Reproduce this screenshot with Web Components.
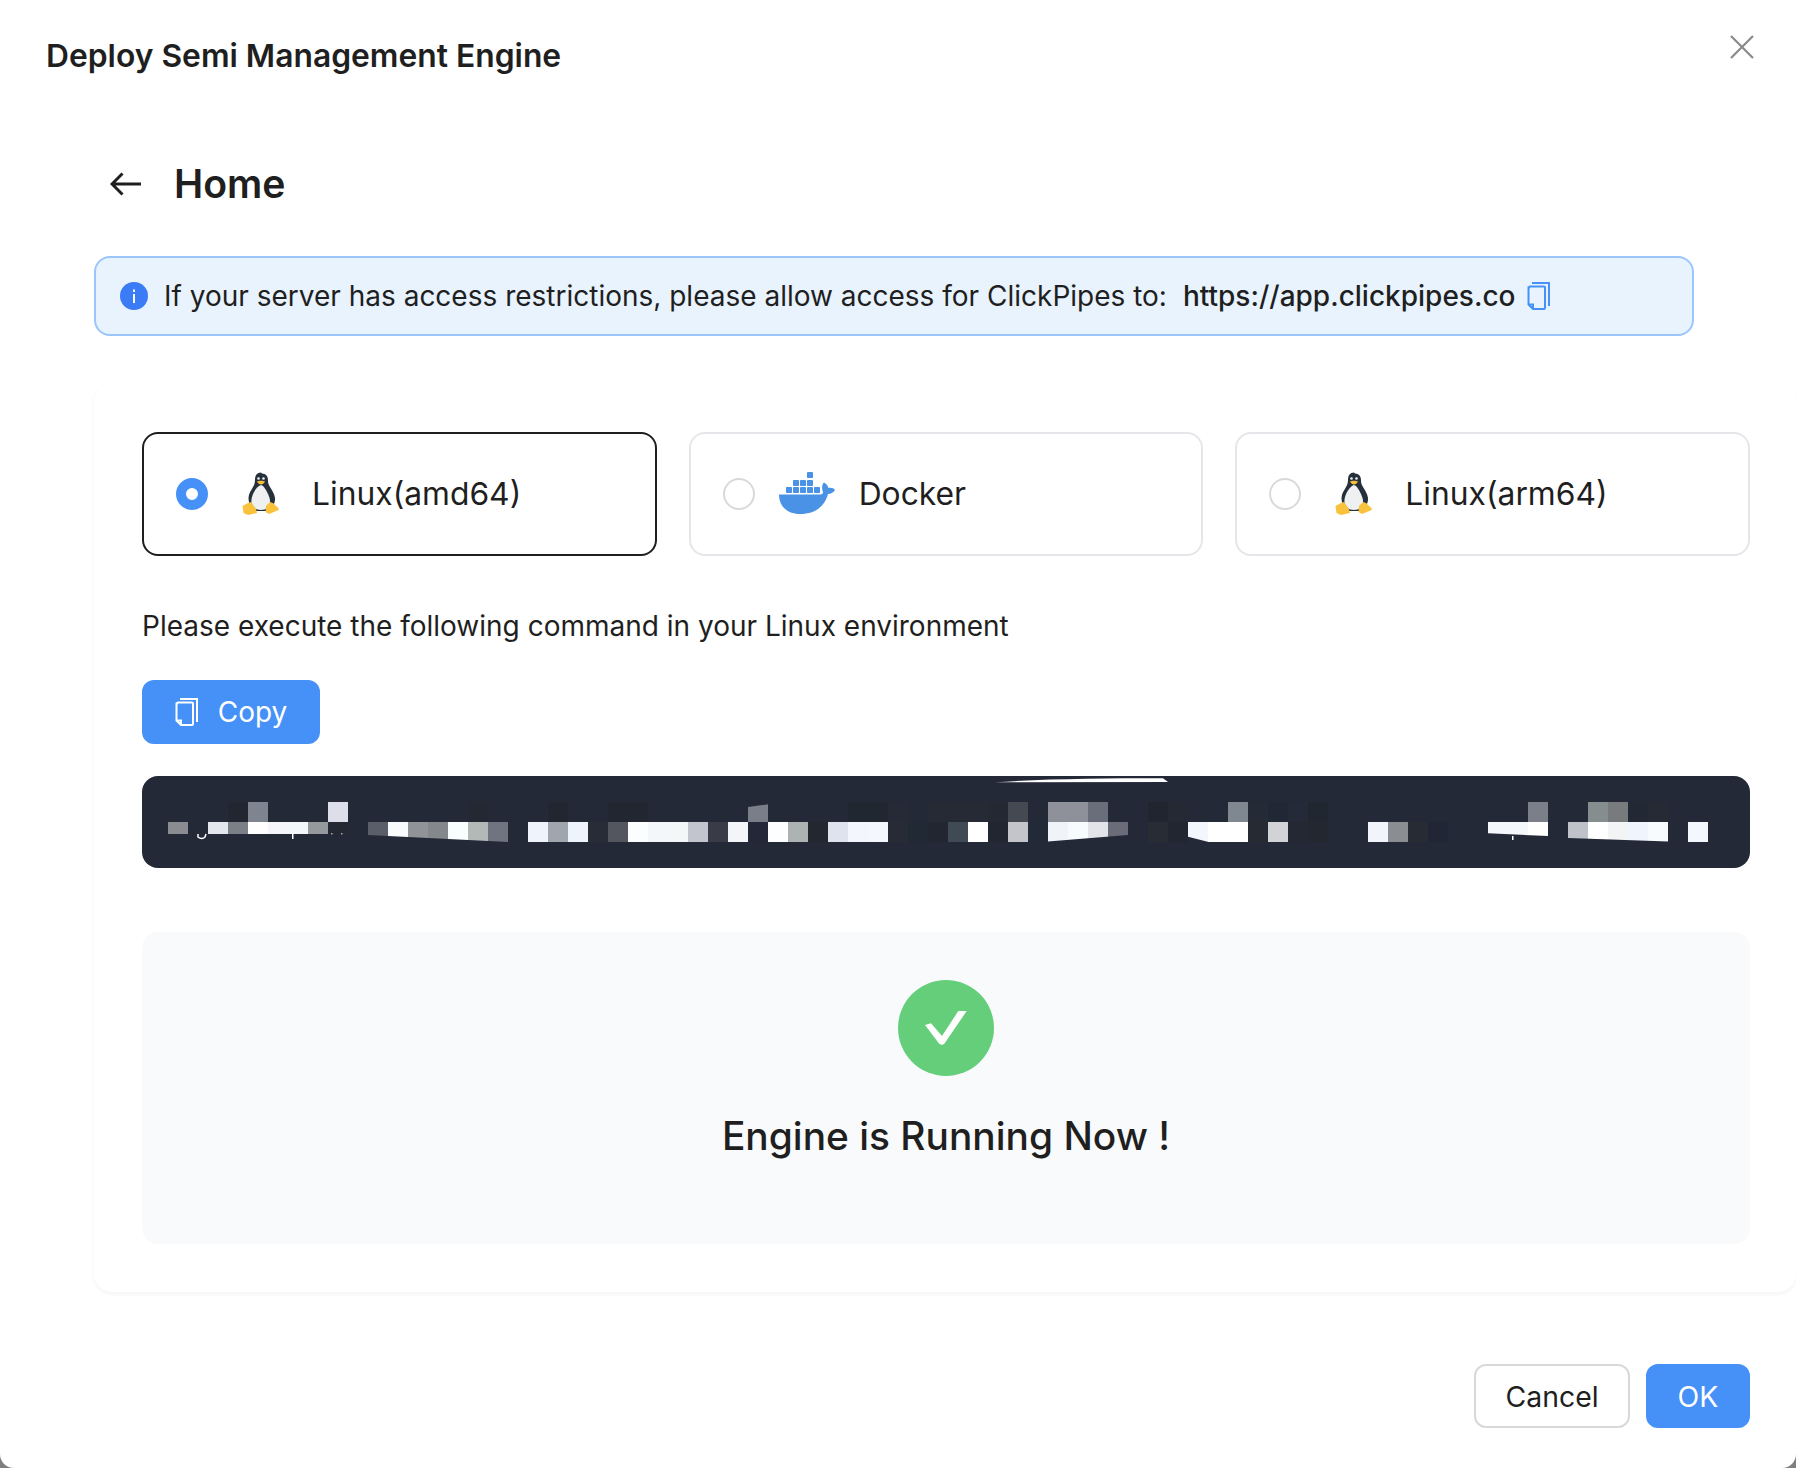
<!DOCTYPE html>
<html><head><meta charset="utf-8">
<style>
html,body{margin:0;padding:0;background:#7f7f7f;height:1468px;overflow:hidden;font-family:Inter,"Liberation Sans",sans-serif;color:#1f1f1f}
</style></head><body>
<deploy-modal heading="Deploy Semi Management Engine">
  <back-title>Home</back-title>
  <info-alert>If your server has access restrictions, please allow access for ClickPipes to:</info-alert>
  <content-card>
    <radio-row>
      <os-option selected icon="linux">Linux(amd64)</os-option>
      <os-option icon="docker">Docker</os-option>
      <os-option icon="linux">Linux(arm64)</os-option>
    </radio-row>
    <cmd-note>Please execute the following command in your Linux environment</cmd-note>
    <ui-button primary icon>Copy</ui-button>
    <code-mosaic></code-mosaic>
    <status-panel>Engine is Running Now !</status-panel>
  </content-card>
  <ui-button slot="footer">Cancel</ui-button>
  <ui-button slot="footer" primary>OK</ui-button>
</deploy-modal>
<script>
const copyIcon = (w,h,c)=>`<svg width="${w}" height="${h}" viewBox="0 0 23 28" fill="none" stroke="${c}" stroke-width="2"><path d="M5 1H22V24" /><path d="M2 5.500a1 1 0 0 1 1-1H17a1 1 0 0 1 1 1V26a1 1 0 0 1-1 1H6L1.500 22.500V5.500Z"/><path d="M1.500 22.500H6V27"/></svg>`;
function def(name, css, html){
  customElements.define(name, class extends HTMLElement{
    connectedCallback(){
      if(this.shadowRoot) return;
      const r=this.attachShadow({mode:'open'});
      r.innerHTML=`<style>${css}</style>`+(typeof html==='function'?html(this):html);
    }
  });
}
def('deploy-modal',`
:host{display:flex;flex-direction:column;width:1796px;height:1468px;background:#fff;border-radius:0 0 14px 14px;position:relative;overflow:hidden;box-sizing:border-box}
header{height:110px;padding-left:46px;display:flex;align-items:center;font-size:31.800px;font-weight:600;color:#1f1f1f;box-sizing:border-box}
.close{position:absolute;left:1730px;top:35px;width:24px;height:24px}
main{padding-left:94px;display:flex;flex-direction:column;flex:1}
footer{display:flex;justify-content:flex-end;gap:16px;padding:0 46px 40px 0}
`,h=>`<header>${h.getAttribute('heading')}</header>
<svg class="close" viewBox="0 0 24 24" fill="none" stroke="#8a8a8a" stroke-width="2.200"><path d="M1 1L23 23M23 1L1 23"/></svg>
<main><slot></slot></main><footer><slot name="footer"></slot></footer>`);
def('back-title',`
:host{display:flex;align-items:center;height:64px;margin-top:41px;margin-bottom:41px;font-size:39.200px;font-weight:600;color:#1f1f1f;padding-left:16px;gap:32px}
svg{flex:none;margin-top:2px}
`,`<svg width="32" height="24" viewBox="0 0 32 24" fill="none" stroke="#1f1f1f" stroke-width="3"><path d="M31 12H2M12.500 1.500L2 12L12.500 22.500"/></svg><span><slot></slot></span>`);
def('info-alert',`
:host{display:flex;align-items:center;box-sizing:border-box;width:1600px;height:80px;background:#e8f3fe;border:2px solid #9ac6fb;border-radius:16px;padding-left:24px;font-size:28px;color:#1f1f1f;white-space:nowrap}
.i{flex:none;margin-right:16px}
b{font-weight:500;margin-left:16px;margin-right:11px}
`,`<svg class="i" width="28" height="28" viewBox="0 0 28 28"><circle cx="14" cy="14" r="14" fill="#3b7bf5"/><rect x="13" y="12" width="2" height="9" fill="#fff"/><rect x="13" y="7.500" width="2" height="2.500" fill="#fff"/></svg><span><slot></slot></span><b>https://app.clickpipes.co</b>`+copyIcon(23,28,'#4691f8'));
def('content-card',`
:host{display:flex;flex-direction:column;box-sizing:border-box;height:909px;margin-top:47px;padding:49px 46px 48px 48px;background:#fff;border-radius:18px;box-shadow:0 2px 4px rgba(0,0,0,.05)}
`,`<slot></slot>`);
def('radio-row',`:host{display:grid;grid-template-columns:repeat(3,1fr);gap:32px}`,`<slot></slot>`);
def('os-option',`
:host{display:flex;align-items:center;box-sizing:border-box;height:124px;border:2px solid #e6e6ea;border-radius:16px;padding-left:32px;font-size:31.800px;color:#1f1f1f;background:#fff}
:host([selected]){border-color:#1f1f1f}
.r{width:32px;height:32px;box-sizing:border-box;border-radius:50%;border:2px solid #d9d9d9;flex:none;background:#fff}
:host([selected]) .r{border:10px solid #4691f8}
.ic{width:56px;height:44px;flex:none;margin:0 24px 0 24px;display:flex;justify-content:center}
span{padding-bottom:2px}
`,h=>{
 const linux=`<svg width="37" height="43" viewBox="0 0 37 43"><path d="M19 .5c-4 0-6 3-6 7 0 3-.5 5-2 7.500-2 3.500-4.500 7-4.500 11 0 4 1.500 8 4.500 13h17c3-4 5.500-9 5-13-.5-4-3-8-5-11-1.500-2.500-2-4-2-6.500 0-4-2-7-6-7Z" fill="#26303a"/><path d="M19 13c-3 1-5.500 4-7.500 8-1.500 3-2.500 7-2 10 .5 3 3 7 9.500 7s8.500-4 9-7c.5-3-1-7-2.500-10-2-4-3.500-7-6.500-8Z" fill="#eef0f2"/><circle cx="16.500" cy="6.500" r="1.300" fill="#eef0f2"/><circle cx="21.500" cy="6.500" r="1.300" fill="#eef0f2"/><path d="M15 9.500c2-1 6-1 8 0-1 2-2.500 3-4 3s-3-1-4-3Z" fill="#f8bd3a"/><polygon points="0.500,34 6,31 9,30 14,37 15,41 6,43 1.500,41" fill="#f9c23c"/><polygon points="28,30 31,31 36.700,36.500 36.700,38 27,42 23.500,40 24,34" fill="#f9c23c"/></svg>`;
 const docker=`<svg width="56" height="43" viewBox="0 0 56 43"><g fill="#4a92e6"><rect x="7" y="15" width="6" height="6" rx=".8"/><rect x="14" y="15" width="6" height="6" rx=".8"/><rect x="21" y="15" width="6" height="6" rx=".8"/><rect x="28" y="15" width="6" height="6" rx=".8"/><rect x="35" y="15" width="6" height="6" rx=".8"/><rect x="14" y="8" width="6" height="6" rx=".8"/><rect x="21" y="8" width="6" height="6" rx=".8"/><rect x="28" y="8" width="6" height="6" rx=".8"/><rect x="28" y="0" width="6" height="6" rx=".8"/><path d="M0 22.500H41.500C44 22.500 44.500 20.500 43.500 18.500 42.500 15 43.500 11.500 45 10.500 47 11.500 49 13.500 49.500 16 52 15.500 55 16.300 56 18 54.500 20.800 51.500 22 49 22 46 33 38 42 21 42 7 42 0 33 0 22.500Z"/></g></svg>`;
 return `<div class="r"></div><div class="ic">${h.getAttribute('icon')==='docker'?docker:linux}</div><span><slot></slot></span>`;
});
def('cmd-note',`:host{display:block;margin-top:52px;height:36px;line-height:36px;font-size:28px;color:#1f1f1f;white-space:nowrap}`,`<slot></slot>`);
def('ui-button',`
:host{display:inline-flex;align-items:center;justify-content:center;box-sizing:border-box;height:64px;padding:0 30px;border:2px solid #d9d9d9;border-radius:12px;background:#fff;font-size:28.400px;color:#1f1f1f;gap:20px;width:fit-content}
:host([primary]){background:#4691f8;border-color:#4691f8;color:#fff}
:host([icon]){margin-top:36px;width:178px;padding:0;font-size:28px}
:host([slot=footer]:not([primary])){width:156px}
:host([slot=footer][primary]){width:104px}
`,h=>(h.hasAttribute('icon')?copyIcon(23,28,'#fff'):'')+`<span><slot></slot></span>`);
const BG='#232936';
const soft=c=>{
  const n=parseInt(c.slice(1),16),r=n>>16,g=n>>8&255,b=n&255;
  if(r+g+b>170) return c;
  const m=(a,t)=>Math.round((a+t)/2).toString(16).padStart(2,'0');
  return '#'+m(r,0x23)+m(g,0x29)+m(b,0x36);
};
const cells=[
 [0,'#8a8c92',,834],[2,'#e4e6ed',,834],[3,'#7b7f88','#1e232b',834],[4,'#ffffff','#7f8590',834],[5,'#f4f6fa',,834],[6,'#f4f7f9',,834],[7,'#96999c',,834],[8,'#22262e','#dcdfe9',834],
 [10,'#5a5e68'],[11,'#f8fafc'],[12,'#909498'],[13,'#84888c'],[14,'#f8fdfe'],[15,'#b4b9b8','#22272f'],[16,'#6f7480'],
 [18,'#eff3fb'],[19,'#a0a6ae','#1f232c'],[20,'#eef4fc'],[21,'#2c2f36'],[22,'#53565f','#1f232c'],[23,'#fbfdff','#1e2329'],[24,'#f4f7fa'],[25,'#f3f7f8'],[26,'#c2c5cd'],[27,'#393c46'],[28,'#f3f5f8'],[29,'#222538','#7a7e88'],[30,'#fdfeff'],[31,'#adb2b3'],[32,'#202529'],[33,'#dfe3ee'],[34,'#f3f7fd','#1f242c'],[35,'#f4f8fc','#1f242c'],[36,'#292d34','#262b36'],[37,'#1f2933'],[38,'#1e232c','#262a33'],[39,'#3f4a55','#262a33'],[40,'#ffffff','#282b33'],
 [41,'#202229','#22262e'],[42,'#c3c5ca','#454952'],[43,'#1f2a36'],[44,'#f0f3f8','#8e9199'],[45,'#f8fbfe','#8e9199'],[46,'#e2e4ea','#6a6e7b'],[47,'#6a6c78'],[49,'#2b2e34','#1c2028'],[50,'#1f2329','#252831'],[51,'#f3f7fd'],[52,'#ffffff'],[53,'#ffffff','#7f8791'],[54,'#282b30','#262d35'],[55,'#d2d3d6','#1f2733'],[56,'#222730','#252a3a'],[57,'#232529','#1e242c'],
 [60,'#f2f4fc'],[61,'#8a8d91'],[62,'#292c31'],[63,'#1e2338'],[66,'#f4f7fc'],[67,'#f4f8fb'],[68,'#ffffff','#7a7f89'],[70,'#bfc2c8'],[71,'#ffffff','#868d8f'],[72,'#f2f4f5','#777b7e'],[73,'#f0f4fc','#202631'],[74,'#f8fbfd','#282a33'],[76,'#f3f8fe']
];
let rects='';
for(const [i,b,t,end] of cells){
  const x=26+20*i;
  const bot=(end||842)-776;
  rects+=`<rect x="${x}" y="46" width="20.200" height="${bot-46}" fill="${soft(b)}"/>`;
  if(t) rects+=`<rect x="${x}" y="26" width="20.200" height="20" fill="${soft(t)}"/>`;
}
const covers=`<polygon points="226,59 366,66 366,67 226,67" fill="${BG}"/>
<polygon points="906,65.500 986,59 986,67 906,67" fill="${BG}"/>
<polygon points="1046,60.700 1066.600,66 1066.600,67 1046,67" fill="${BG}"/>
<polygon points="1346,57.300 1406,60 1406,67 1346,67" fill="${BG}"/>
<polygon points="1426,62 1526,65.500 1526,67 1426,67" fill="${BG}"/>
<polygon points="606,26 626.200,26 626.200,28.300 606,31" fill="${BG}"/>
<path d="M853 6.300C900 3 960 2.300 1021 2.300L1026 6Z" fill="#fff"/>
<path d="M56 58v3q4,3 7,0l1,-3" fill="none" stroke="#fff" stroke-width="1.500"/>
<rect x="150" y="58" width="1.500" height="5" fill="#fff"/>
<rect x="1370" y="60" width="1.500" height="4" fill="#fff"/>
<rect x="189" y="57" width="1.500" height="1.500" fill="#aaa"/><rect x="199" y="57" width="1.500" height="1.500" fill="#aaa"/>`;
def('code-mosaic',`:host{display:block;margin-top:32px;height:92px;background:${BG};border-radius:16px;overflow:hidden;flex:none}svg{display:block}`,
 `<svg width="1608" height="92" viewBox="0 0 1608 92"><g shape-rendering="crispEdges">${rects}</g>${covers}</svg>`);
def('status-panel',`
:host{display:flex;flex-direction:column;align-items:center;box-sizing:border-box;margin-top:64px;height:312px;background:#f9fafc;border-radius:16px;padding-top:48px;font-size:38.900px;font-weight:500;color:#1f1f1f}
span{margin-top:36px;line-height:48px}
svg{display:block}
`,`<svg width="96" height="96" viewBox="0 0 96 96"><circle cx="48" cy="48" r="48" fill="#65ce7b"/><path d="M27 45L33 43.300L44 56L60.300 31H68.700L46.500 63.500Q44 66 41 63.500Z" fill="#fff"/></svg><span><slot></slot></span>`);
</script>
</body></html>
